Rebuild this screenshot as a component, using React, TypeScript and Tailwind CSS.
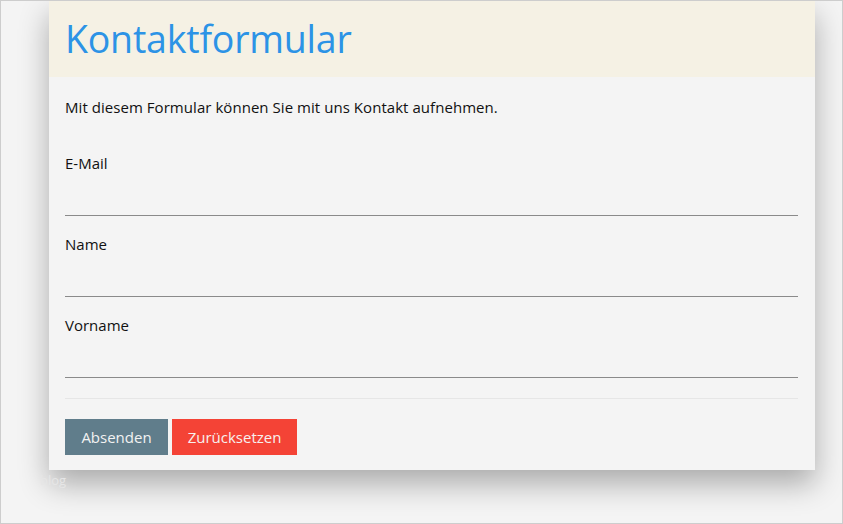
export default function App() {
  const fields = ["E-Mail", "Name", "Vorname"];
  return (
    <div className="w-[843px] h-[524px] border border-[#cdcdcd] bg-[#f4f4f4] overflow-hidden font-['Open_Sans',sans-serif]">
      <div className="ml-[48px] w-[766px] bg-[#f4f4f4] shadow-[0_14px_28px_rgba(0,0,0,0.3)]">
        <div className="h-[76px] bg-[#f5f1e4] px-4 flex items-center">
          <h1 className="text-[37.5px] leading-none text-[#2c93e6] tracking-[-0.2px]">Kontaktformular</h1>
        </div>
        <form className="pl-4 pr-[17px] pt-[19px] pb-[15px]" onSubmit={(e) => e.preventDefault()}>
          <p className="text-[15px] leading-[22px] text-[#111] tracking-[0.05px]">
            Mit diesem Formular können Sie mit uns Kontakt aufnehmen.
          </p>
          <div className="mt-[34px]">
            {fields.map((f) => (
              <div key={f} className="pb-[17px]">
                <label className="block text-[15px] leading-[22px] text-[#111]">{f}</label>
                <input
                  type="text"
                  className="block w-full h-[42px] bg-transparent border-b border-[#8a8a8a] outline-none"
                />
              </div>
            ))}
          </div>
          <div className="border-t border-[#e6e6e6] mt-[3px] pt-[20px] flex gap-1">
            <button type="submit" className="h-[36px] w-[103px] bg-[#607d8b] text-[#f2f2f2] text-[15px]">
              Absenden
            </button>
            <button type="reset" className="h-[36px] w-[125px] bg-[#f44336] text-[#f7f0ee] text-[15px]">
              Zurücksetzen
            </button>
          </div>
        </form>
      </div>
      <div className="ml-[39px] mt-[1px] text-[13px] text-[#e6e6e6]">blog</div>
    </div>
  );
}
